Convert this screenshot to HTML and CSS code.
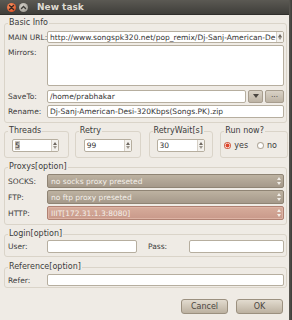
FILE: index.html
```html
<!DOCTYPE html>
<html lang="en">
<head>
    <meta charset="UTF-8">
    <title>New task</title>
    <link rel="stylesheet" href="styles.css">
</head>
<body>
    <div class="screen">
        <div class="window">
            <div class="titlebar">
                <span class="wbtn close">
                    <svg width="9" height="9" viewBox="0 0 9 9"><path d="M2.5 2.5l4 4M6.5 2.5l-4 4" stroke="#3a2a22" stroke-width="1.4" stroke-linecap="round"/></svg>
                </span>
                <span class="wbtn min">
                    <svg width="9" height="9" viewBox="0 0 9 9"><path d="M2.5 5.5l2-2 2 2" stroke="#3c3b37" stroke-width="1.4" fill="none" stroke-linecap="round"/></svg>
                </span>
                <span class="title">New task</span>
            </div>

            <div class="content">
                <fieldset class="group basic">
                    <legend>Basic Info</legend>
                    <div class="row first">
                        <label>MAIN URL:</label>
                        <div class="edit combo">
                            <span class="val">http://www.songspk320.net/pop_remix/Dj-Sanj-American-De</span>
                            <span class="spin"></span>
                        </div>
                    </div>
                    <div class="row mirrors">
                        <label>Mirrors:</label>
                        <div class="edit area"></div>
                    </div>
                    <div class="row save">
                        <label>SaveTo:</label>
                        <div class="edit"><span class="val">/home/prabhakar</span></div>
                        <span class="tbtn drop">
                            <svg width="6" height="5" viewBox="0 0 6 5"><path d="M0 0h6L3 4z" fill="#4a4540"/></svg>
                        </span>
                        <span class="tbtn dots">...</span>
                    </div>
                    <div class="row rename">
                        <label>Rename:</label>
                        <div class="edit"><span class="val">Dj-Sanj-American-Desi-320Kbps(Songs.PK).zip</span></div>
                    </div>
                </fieldset>

                <div class="opts">
                    <fieldset class="group small threads">
                        <legend>Threads</legend>
                        <div class="edit spinbox"><span class="val"><span class="sel">5</span></span><span class="spin"></span></div>
                    </fieldset>
                    <fieldset class="group small retry">
                        <legend>Retry</legend>
                        <div class="edit spinbox"><span class="val">99</span><span class="spin"></span></div>
                    </fieldset>
                    <fieldset class="group small wait">
                        <legend>RetryWait[s]</legend>
                        <div class="edit spinbox"><span class="val">30</span><span class="spin"></span></div>
                    </fieldset>
                    <fieldset class="group small runnow">
                        <legend>Run now?</legend>
                        <div class="radios">
                            <span class="radio on"></span><span class="rlabel">yes</span>
                            <span class="radio"></span><span class="rlabel">no</span>
                        </div>
                    </fieldset>
                </div>

                <fieldset class="group proxys">
                    <legend>Proxys[option]</legend>
                    <div class="row first">
                        <label>SOCKS:</label>
                        <div class="pcombo"><span class="val">no socks proxy preseted</span><span class="spin light"></span></div>
                    </div>
                    <div class="row">
                        <label>FTP:</label>
                        <div class="pcombo"><span class="val">no ftp proxy preseted</span><span class="spin light"></span></div>
                    </div>
                    <div class="row">
                        <label>HTTP:</label>
                        <div class="pcombo http"><span class="val">IIIT[172.31.1.3:8080]</span><span class="spin light"></span></div>
                    </div>
                </fieldset>

                <fieldset class="group login">
                    <legend>Login[option]</legend>
                    <div class="row first">
                        <label>User:</label>
                        <div class="edit user"></div>
                        <label class="pass-label">Pass:</label>
                        <div class="edit pass"></div>
                    </div>
                </fieldset>

                <fieldset class="group reference">
                    <legend>Reference[option]</legend>
                    <div class="row first">
                        <label>Refer:</label>
                        <div class="edit refer"></div>
                    </div>
                </fieldset>

                <div class="actions">
                    <button class="pbtn">Cancel</button>
                    <button class="pbtn">OK</button>
                </div>
            </div>
        </div>
        <div class="edge"></div>
    </div>
</body>
</html>
```

FILE: styles.css
```css
body {
    margin: 0;
    font-family: "DejaVu Sans", sans-serif;
    font-size: 7.5px;
    color: #3c3c3c;
    background: #efebe5;
}

.screen {
    display: flex;
    width: 292px;
    height: 320px;
    overflow: hidden;
}

.window {
    width: 289px;
    height: 320px;
    background: #efebe5;
}

.edge {
    width: 3px;
    height: 320px;
    background: linear-gradient(to right, #5a5852, #3c3b37);
}

/* title bar */
.titlebar {
    height: 15px;
    display: flex;
    align-items: center;
    padding-left: 7px;
    background: linear-gradient(to bottom, #5b5953, #3f3e3a);
    border-bottom: 1px solid #2f2e2b;
    box-sizing: border-box;
}

.wbtn {
    width: 9px;
    height: 9px;
    border-radius: 50%;
    display: flex;
    margin-right: 3px;
}

.wbtn.close {
    background: radial-gradient(circle at 40% 35%, #f89a6a, #e2572a 70%, #b8431f);
}

.wbtn.min {
    background: radial-gradient(circle at 40% 35%, #d6d3cc, #a6a39b 70%, #7d7a73);
}

.title {
    margin-left: 6px;
    color: #dfdbd2;
    font-weight: bold;
    font-size: 9px;
}

/* groups */
.content {
    padding: 3px 1px 0 4px;
}

.group {
    margin: 0;
    border: 1px solid #dad4c9;
    border-radius: 3px;
    padding: 3px 2px 4px 2px;
    min-width: 0;
}

.group legend {
    padding: 0 1px;
    margin-left: 1px;
    line-height: 10px;
    height: 10px;
    font-size: 8px;
    color: #3c3c3c;
    white-space: nowrap;
}

.basic {
    width: 283px;
    box-sizing: border-box;
}

.row {
    display: flex;
    align-items: center;
}

.row label {
    width: 40px;
    flex: none;
    padding-left: 1px;
    box-sizing: border-box;
    white-space: nowrap;
    font-size: 7.5px;
}

.edit {
    background: #fff;
    border: 1px solid #b6ae9f;
    border-radius: 2px;
    box-sizing: border-box;
    height: 13px;
    flex: 1;
    display: flex;
    align-items: center;
    overflow: hidden;
    min-width: 0;
}

.val {
    padding-left: 2px;
    white-space: nowrap;
    overflow: hidden;
    flex: 1;
    color: #333;
}

.spin {
    width: 6px;
    height: 100%;
    flex: none;
    border-left: 1px solid #d6d0c6;
    background: #f4f2ee;
    position: relative;
}

.spin::before,
.spin::after {
    content: "";
    position: absolute;
    left: 1px;
    border-left: 2px solid transparent;
    border-right: 2px solid transparent;
}

.spin::before {
    top: 2px;
    border-bottom: 3px solid #6d675f;
}

.spin::after {
    bottom: 2px;
    border-top: 3px solid #9d978e;
}

.spin.light {
    background: transparent;
    border-left: none;
    margin-right: 1px;
}

.spin.light::before {
    border-bottom-color: #f2eee8;
}

.spin.light::after {
    border-top-color: #f2eee8;
}

.row.first .edit.combo {
    height: 12px;
}

.mirrors {
    margin-top: 2px;
    align-items: flex-start;
}

.mirrors label {
    margin-top: 3px;
}

.edit.area {
    height: 41px;
}

.save {
    margin-top: 4px;
}

.tbtn {
    height: 13px;
    box-sizing: border-box;
    border: 1px solid #a79d8e;
    border-radius: 2px;
    background: linear-gradient(to bottom, #d9d2c6, #bdb3a4);
    display: flex;
    align-items: center;
    justify-content: center;
    color: #4a4540;
    flex: none;
}

.tbtn.drop {
    width: 15px;
    margin-left: 2px;
}

.tbtn.dots {
    width: 19px;
    margin-left: 2px;
    line-height: 8px;
    padding-bottom: 3px;
}

.rename {
    margin-top: 2px;
}

/* small option groups */
.opts {
    display: flex;
    margin-top: 3px;
}

.small {
    padding: 3px 2px 5px 2px;
    box-sizing: border-box;
}

.threads { width: 65px; }
.retry { width: 66px; margin-left: 6px; }
.wait { width: 65px; margin-left: 8px; }
.runnow { width: 68px; margin-left: 7px; }

.spinbox {
    flex: none;
    width: 47px;
    margin-left: 5px;
}

.retry .spinbox { width: 48px; margin-left: 6px; }
.wait .spinbox { width: 48px; margin-left: 5px; }

.sel {
    background: #c9c3ba;
}

.radios {
    display: flex;
    align-items: center;
    height: 13px;
}

.radio {
    width: 7px;
    height: 7px;
    border-radius: 50%;
    box-sizing: border-box;
    border: 1px solid #b3aa9c;
    background: #fff;
    margin-left: 1px;
}

.radio.on {
    background: radial-gradient(circle, #e0452a 0, #e0452a 1.8px, #fff 2.2px);
    border-color: #d2664e;
}

.rlabel {
    margin: 0 8px 0 3px;
    font-size: 8px;
}

/* proxies */
.proxys {
    margin-top: 4px;
    width: 283px;
    box-sizing: border-box;
    padding-top: 2px;
}

.proxys .row + .row {
    margin-top: 2px;
}

.pcombo {
    flex: 1;
    height: 14px;
    box-sizing: border-box;
    border: 1px solid #8f8474;
    border-radius: 2px;
    background: linear-gradient(to bottom, #bdb2a1, #a5998a);
    display: flex;
    align-items: center;
    color: #f3efe9;
}

.pcombo .val {
    color: #f3efe9;
    padding-left: 3px;
}

.pcombo.http {
    border-color: #b08172;
    background: linear-gradient(to bottom, #d6ac9b, #c9998a);
    box-shadow: inset 0 0 0 1px #dcb3a4;
}

/* login / reference */
.login {
    margin-top: 4px;
    width: 283px;
    box-sizing: border-box;
    padding-top: 1px;
    padding-bottom: 3px;
}

.edit.user {
    flex: none;
    width: 90px;
}

.row label.pass-label {
    width: auto;
    margin-left: 10px;
    flex: 1;
}

.edit.pass {
    flex: none;
    width: 95px;
}

.reference {
    margin-top: 5px;
    width: 283px;
    box-sizing: border-box;
    padding-top: 2px;
    padding-bottom: 1px;
}

.edit.refer {
    height: 12px;
}

/* bottom buttons */
.actions {
    display: flex;
    justify-content: flex-end;
    gap: 8px;
    margin-top: 11px;
    padding-right: 5px;
}

.pbtn {
    font-family: "DejaVu Sans", sans-serif;
    font-size: 8px;
    color: #4a453f;
    height: 15px;
    width: 47px;
    padding: 0;
    border: 1px solid #9b907f;
    border-radius: 3px;
    background: linear-gradient(to bottom, #e2dbcf, #bcb1a0);
}
```
